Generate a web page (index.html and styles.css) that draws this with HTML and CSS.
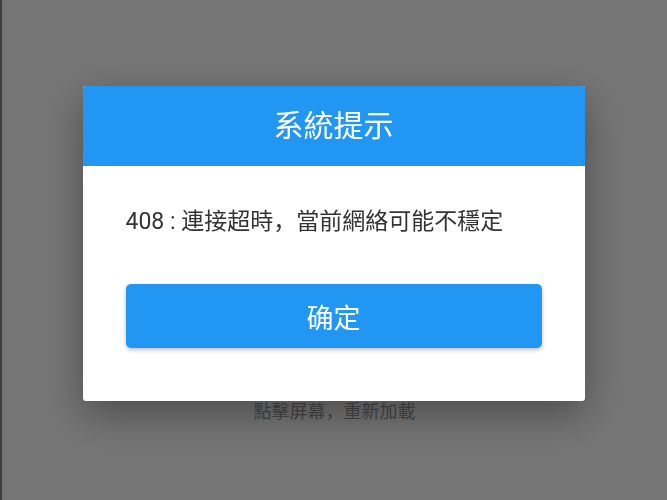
FILE: index.html
```html
<!DOCTYPE html>
<html lang="zh">
<head>
    <meta charset="UTF-8">
    <meta name="viewport" content="width=device-width, initial-scale=1.0">
    <link rel="stylesheet" href="styles.css">
    <title>系統提示</title>
</head>
<body>

    <div class="page">
        <p class="reload-tip">點擊屏幕，重新加載</p>
    </div>

    <div class="mask">
        <div class="dialog">
            <div class="dialog-header">系統提示</div>
            <div class="dialog-body">
                <p class="dialog-msg"><span class="code">408 : </span>連接超時，當前網絡可能不穩定</p>
                <button class="dialog-btn">确定</button>
            </div>
        </div>
    </div>

</body>
</html>
```

FILE: styles.css
```css
*{
    margin: 0;
    padding: 0;
    box-sizing: border-box;
}
html, body{
    height: 100%;
}
body{
    font-family: Roboto, "Noto Sans CJK SC", sans-serif;
    background-color: #fff;
    overflow: hidden;
}

.page{
    height: 100%;
    border-left: 2px solid #8a8a8a;
    padding-top: 400px;
    text-align: center;
}
.reload-tip{
    font-size: 18px;
    line-height: 24px;
    color: #9a9a9a;
}

.mask{
    position: fixed;
    top: 0;
    left: 0;
    width: 100%;
    height: 100%;
    background-color: rgba(0, 0, 0, .54);
    display: flex;
    justify-content: center;
    align-items: flex-start;
    padding-top: 86px;
}

.dialog{
    width: 502px;
    height: 315px;
    background-color: #fff;
    border-radius: 3px;
    overflow: hidden;
    box-shadow: 0 14px 40px rgba(0, 0, 0, .35);
}
.dialog-header{
    height: 80px;
    background-color: #2196f3;
    color: #fff;
    font-size: 30px;
    line-height: 80px;
    text-align: center;
}
.dialog-body{
    padding: 38px 43px 0;
}
.dialog-msg{
    height: 30px;
    font-family: "Noto Sans CJK SC", sans-serif;
    font-size: 23px;
    line-height: 30px;
    color: #333;
}
.dialog-msg .code{
    font-family: Roboto, sans-serif;
}
.dialog-btn{
    display: block;
    width: 100%;
    height: 64px;
    margin-top: 50px;
    border: none;
    border-radius: 5px;
    background-color: #2196f3;
    color: #fff;
    font-family: inherit;
    font-size: 27px;
    box-shadow: 0 2px 4px rgba(0, 0, 0, .25);
}
```
